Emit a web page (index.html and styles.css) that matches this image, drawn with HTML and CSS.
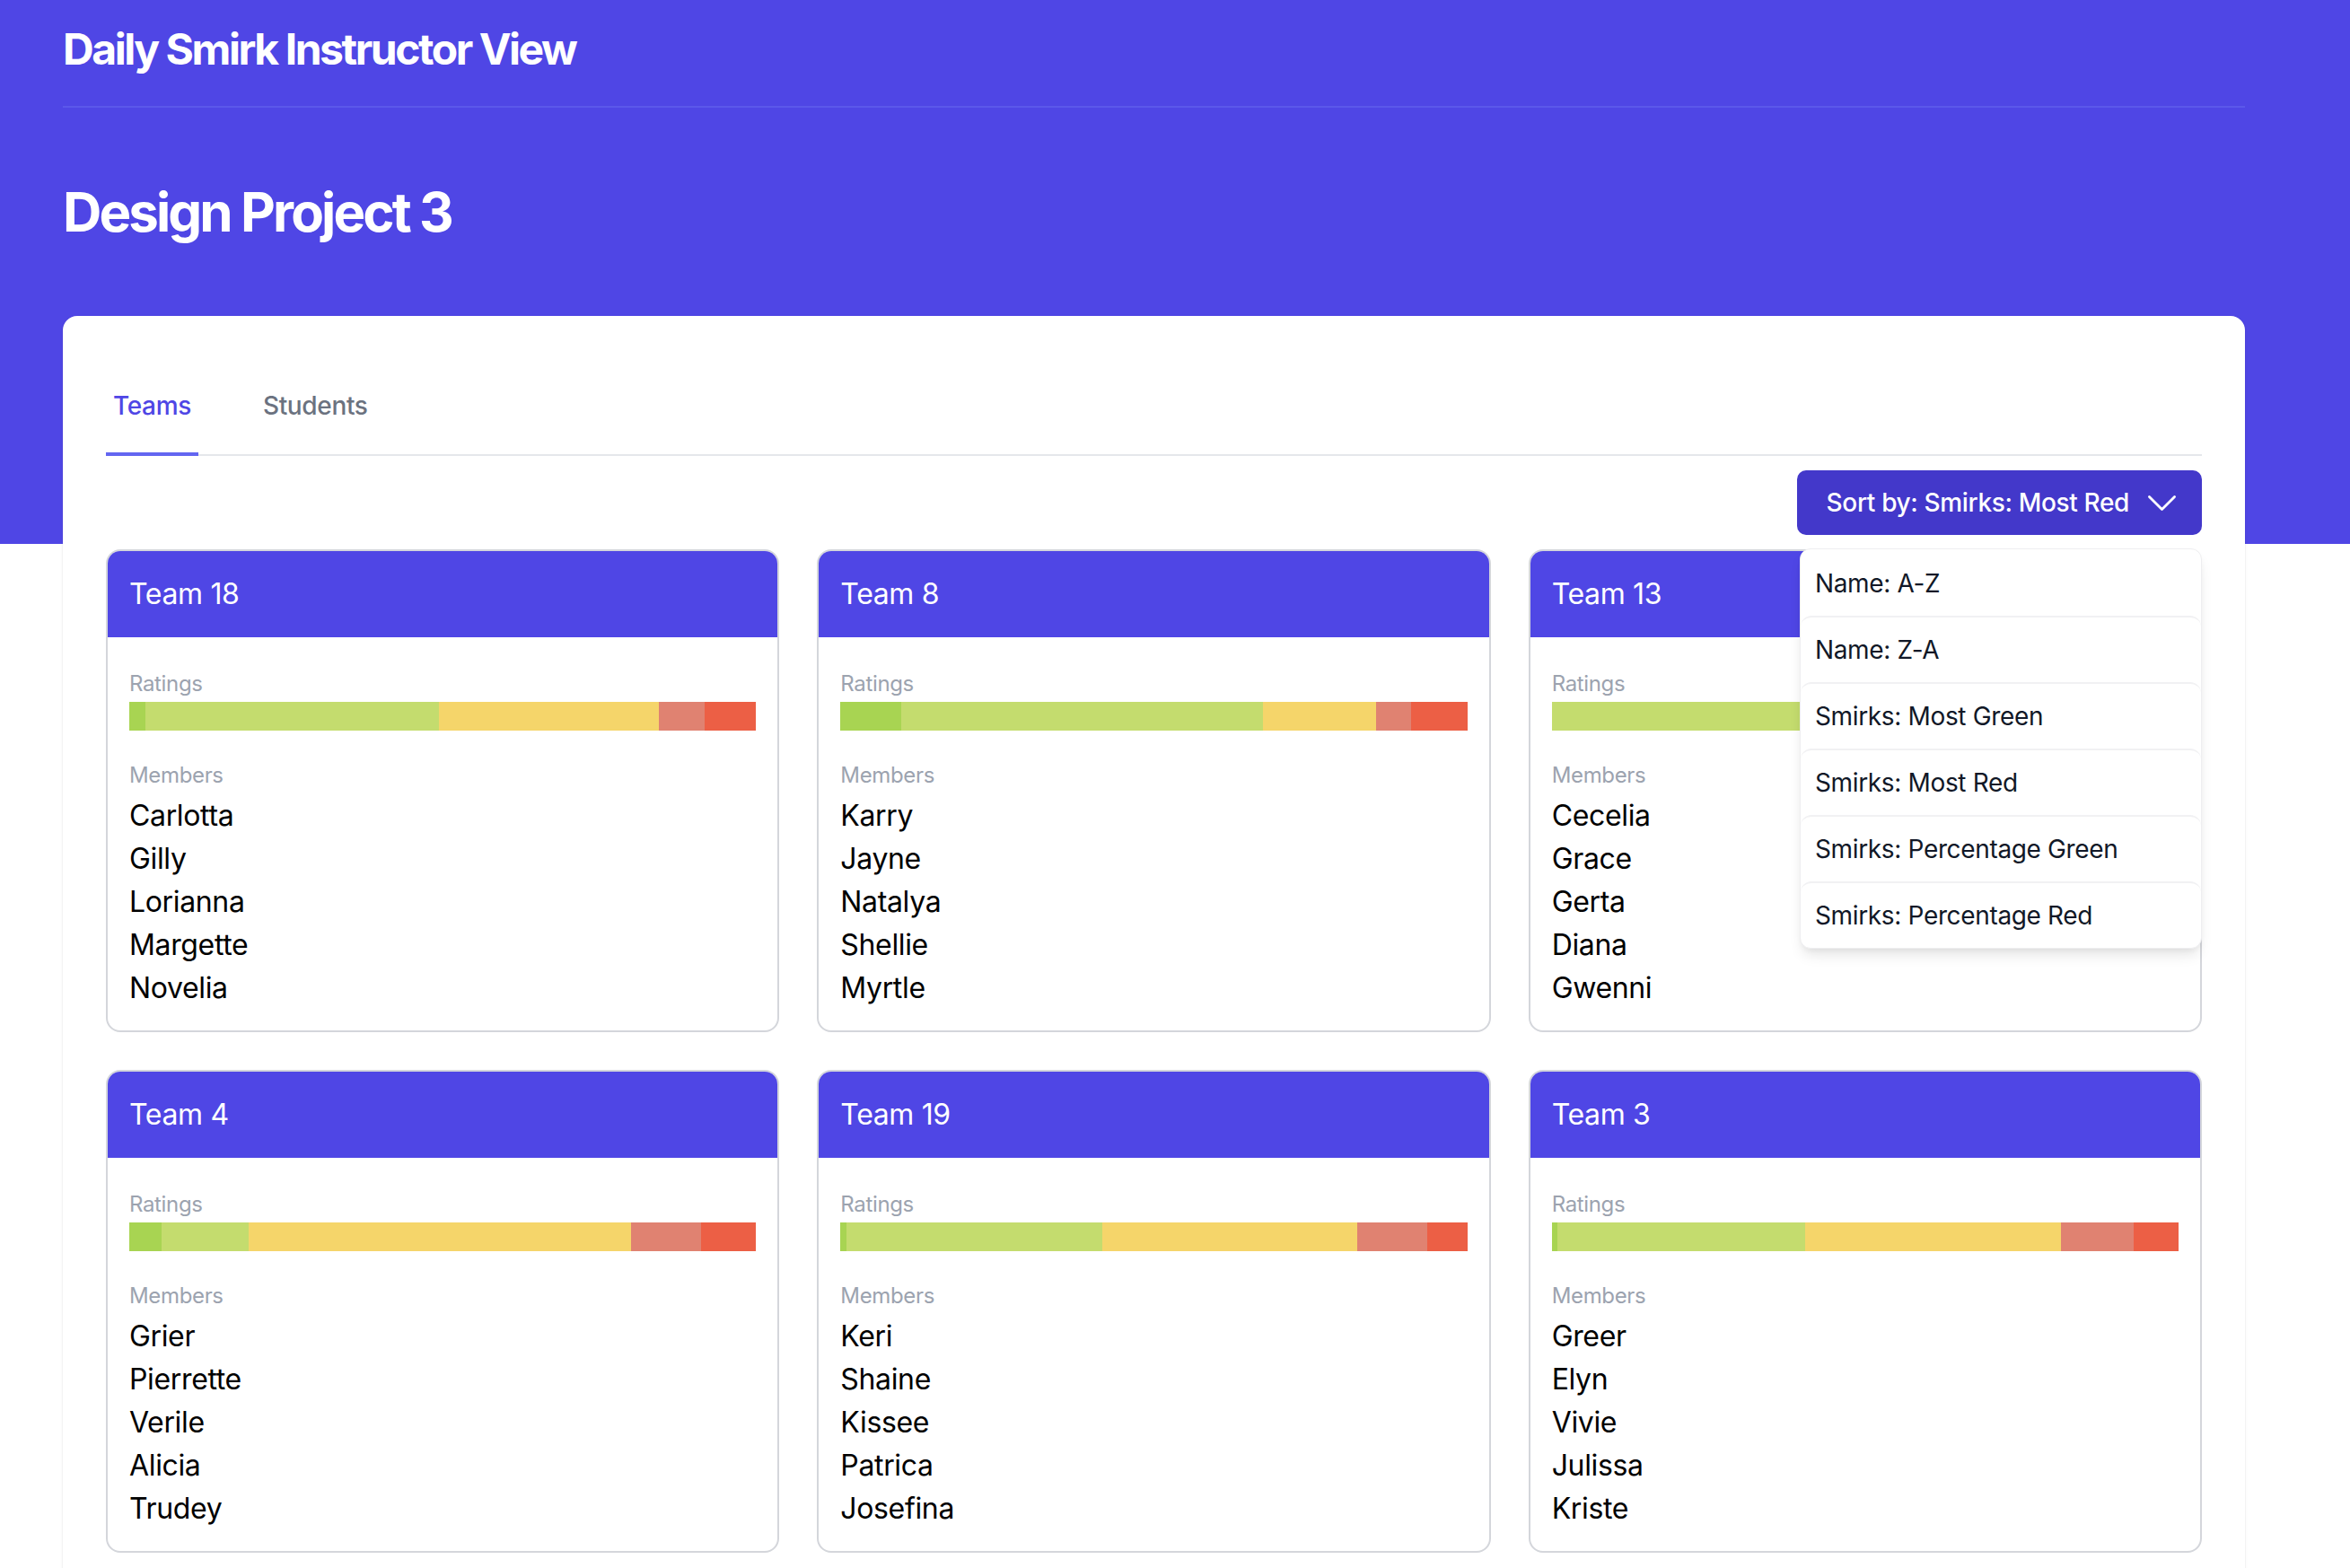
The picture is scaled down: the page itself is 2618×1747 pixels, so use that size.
FILE: index.html
```html
<!DOCTYPE html>
<html lang="en">
<head>
<meta charset="utf-8">
<title>Daily Smirk Instructor View</title>
<link rel="stylesheet" href="styles.css">
</head>
<body>
<div class="hero">
  <div class="container">
    <nav class="topbar">
      <h1 class="brand">Daily Smirk Instructor View</h1>
    </nav>
    <h2 class="project">Design Project 3</h2>
  </div>
</div>
<main class="container panel-wrap">
  <section class="panel">
    <div class="tabs">
      <a class="tab active">Teams</a>
      <a class="tab">Students</a>
    </div>
    <div class="toolbar">
      <div class="sort">
        <button class="sort-btn">
          <span>Sort by: Smirks: Most Red</span>
          <svg class="chev" viewBox="0 0 24 24" fill="none" stroke="currentColor" stroke-width="1.5"><path stroke-linecap="round" stroke-linejoin="round" d="M19.5 8.25l-7.5 7.5-7.5-7.5"/></svg>
        </button>
        <ul class="menu">
          <li class="menu-item">Name: A-Z</li>
          <li class="menu-item">Name: Z-A</li>
          <li class="menu-item">Smirks: Most Green</li>
          <li class="menu-item">Smirks: Most Red</li>
          <li class="menu-item">Smirks: Percentage Green</li>
          <li class="menu-item">Smirks: Percentage Red</li>
        </ul>
      </div>
    </div>
    <div class="grid">
      <article class="card">
        <header class="card-head">Team 18</header>
        <div class="card-body">
          <div class="label">Ratings</div>
          <div class="bar"><span class="s g2" style="width:2.6%"></span><span class="s g1" style="width:46.8%"></span><span class="s y" style="width:35.1%"></span><span class="s o" style="width:7.3%"></span><span class="s r" style="width:8.2%"></span></div>
          <div class="label members">Members</div>
          <ul class="names"><li>Carlotta</li><li>Gilly</li><li>Lorianna</li><li>Margette</li><li>Novelia</li></ul>
        </div>
      </article>
      <article class="card">
        <header class="card-head">Team 8</header>
        <div class="card-body">
          <div class="label">Ratings</div>
          <div class="bar"><span class="s g2" style="width:9.7%"></span><span class="s g1" style="width:57.7%"></span><span class="s y" style="width:18%"></span><span class="s o" style="width:5.6%"></span><span class="s r" style="width:9%"></span></div>
          <div class="label members">Members</div>
          <ul class="names"><li>Karry</li><li>Jayne</li><li>Natalya</li><li>Shellie</li><li>Myrtle</li></ul>
        </div>
      </article>
      <article class="card">
        <header class="card-head">Team 13</header>
        <div class="card-body">
          <div class="label">Ratings</div>
          <div class="bar"><span class="s g1" style="width:56%"></span><span class="s y" style="width:25%"></span><span class="s o" style="width:8%"></span><span class="s r" style="width:11%"></span></div>
          <div class="label members">Members</div>
          <ul class="names"><li>Cecelia</li><li>Grace</li><li>Gerta</li><li>Diana</li><li>Gwenni</li></ul>
        </div>
      </article>
      <article class="card">
        <header class="card-head">Team 4</header>
        <div class="card-body">
          <div class="label">Ratings</div>
          <div class="bar"><span class="s g2" style="width:5.1%"></span><span class="s g1" style="width:14%"></span><span class="s y" style="width:61%"></span><span class="s o" style="width:11.1%"></span><span class="s r" style="width:8.8%"></span></div>
          <div class="label members">Members</div>
          <ul class="names"><li>Grier</li><li>Pierrette</li><li>Verile</li><li>Alicia</li><li>Trudey</li></ul>
        </div>
      </article>
      <article class="card">
        <header class="card-head">Team 19</header>
        <div class="card-body">
          <div class="label">Ratings</div>
          <div class="bar"><span class="s g2" style="width:0.9%"></span><span class="s g1" style="width:40.9%"></span><span class="s y" style="width:40.7%"></span><span class="s o" style="width:11.1%"></span><span class="s r" style="width:6.4%"></span></div>
          <div class="label members">Members</div>
          <ul class="names"><li>Keri</li><li>Shaine</li><li>Kissee</li><li>Patrica</li><li>Josefina</li></ul>
        </div>
      </article>
      <article class="card">
        <header class="card-head">Team 3</header>
        <div class="card-body">
          <div class="label">Ratings</div>
          <div class="bar"><span class="s g2" style="width:0.9%"></span><span class="s g1" style="width:39.6%"></span><span class="s y" style="width:40.8%"></span><span class="s o" style="width:11.5%"></span><span class="s r" style="width:7.2%"></span></div>
          <div class="label members">Members</div>
          <ul class="names"><li>Greer</li><li>Elyn</li><li>Vivie</li><li>Julissa</li><li>Kriste</li></ul>
        </div>
      </article>
    </div>
  </section>
</main>
</body>
</html>
```

FILE: styles.css
```css
* { box-sizing: border-box; }
html, body { margin: 0; padding: 0; }
body {
  font-family: Inter, "Noto Sans", "Liberation Sans", sans-serif;
  background: #ffffff;
  color: #000;
  min-height: 2000px;
  letter-spacing: -0.35px;
}
.container {
  width: 2431px;
  margin-left: 70px;
}
.hero {
  background: #4f46e5;
  height: 606px;
}
.topbar {
  padding-top: 31px;
  height: 120px;
  border-bottom: 2px solid #5b58ea;
}
.brand {
  margin: 0;
  font-size: 48px;
  line-height: 48px;
  font-weight: 700;
  letter-spacing: -2.45px;
  color: #fff;
}
.project {
  margin: 86px 0 0 0;
  font-size: 60px;
  line-height: 60px;
  font-weight: 700;
  letter-spacing: -2.9px;
  color: #fff;
}
.panel-wrap {
  margin-top: -254px;
}
.panel {
  background: #fff;
  border-radius: 16px;
  box-shadow: 0 1px 3px rgba(0,0,0,0.10), 0 1px 2px rgba(0,0,0,0.06);
  padding: 48px 48px 80px 48px;
}
.tabs {
  display: flex;
  gap: 64px;
  border-bottom: 2px solid #e5e7eb;
}
.tab {
  display: block;
  padding: 32px 8px 32px 8px;
  font-size: 28px;
  line-height: 40px;
  font-weight: 500;
  color: #6b7280;
  margin-bottom: -2px;
  border-bottom: 4px solid transparent;
}
.tab.active {
  color: #4f46e5;
  border-bottom-color: #6366f1;
}
.toolbar {
  display: flex;
  justify-content: flex-end;
  margin-top: 16px;
}
.sort { position: relative; }
.sort-btn {
  display: flex;
  align-items: center;
  height: 72px;
  padding: 0 22px 0 33px;
  border: 0;
  border-radius: 10px;
  background: #4338ca;
  color: #fff;
  font-family: inherit;
  font-size: 28px;
  line-height: 40px;
  font-weight: 500;
  letter-spacing: -0.35px;
}
.chev {
  width: 45px;
  height: 45px;
  margin-left: 14px;
}
.menu {
  position: absolute;
  z-index: 10;
  top: calc(100% + 15px);
  right: 0;
  width: 448px;
  margin: 0;
  padding: 0;
  list-style: none;
  background: #fff;
  border: 1px solid #eeeef0;
  border-radius: 12px;
  box-shadow: 0 10px 15px -3px rgba(0,0,0,0.10), 0 4px 6px -2px rgba(0,0,0,0.05);
  overflow: hidden;
}
.menu-item {
  padding: 16px 16px 16px 16px;
  font-size: 28px;
  line-height: 40px;
  color: #111827;
  border-top: 2px solid #f1f1f3;
  border-radius: 12px;
  height: 74px;
}
.menu-item:first-child { border-top-color: transparent; }
.grid {
  display: grid;
  grid-template-columns: repeat(3, 1fr);
  column-gap: 42px;
  row-gap: 42px;
  margin-top: 16px;
}
.card {
  border: 2px solid #d4d6db;
  border-radius: 16px;
  overflow: hidden;
  background: #fff;
}
.card-head {
  background: #4f46e5;
  color: #fff;
  font-size: 32px;
  line-height: 48px;
  padding: 24px 24px;
  font-weight: 400;
}
.card-body {
  padding: 36px 24px 23px 24px;
}
.label {
  font-size: 24px;
  line-height: 32px;
  color: #9ca3af;
}
.members { margin-top: 34px; }
.bar {
  display: flex;
  height: 32px;
  margin-top: 4px;
}
.s { display: block; height: 100%; }
.g2 { background: #a8d452; }
.g1 { background: #c4dc6e; }
.y { background: #f5d56a; }
.o { background: #e08271; }
.r { background: #ec5f45; }
.names {
  list-style: none;
  margin: 5px 0 0 0;
  padding: 0;
  font-size: 32px;
  line-height: 48px;
  color: #000;
}
```
